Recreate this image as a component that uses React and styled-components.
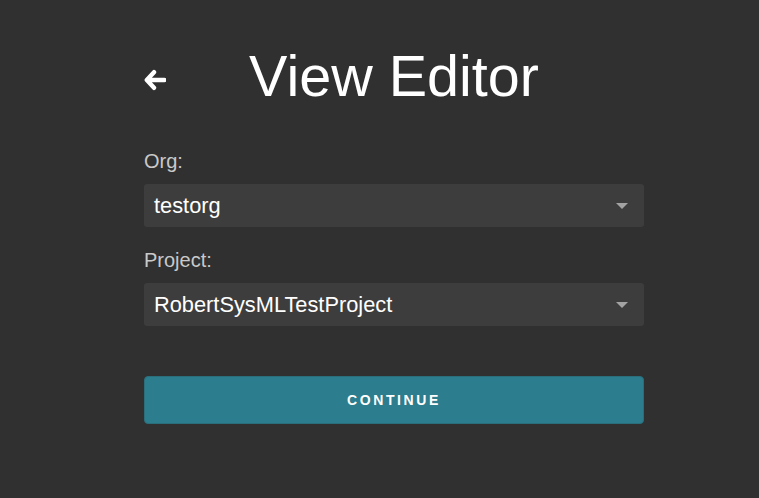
import React from "react";
import styled, { createGlobalStyle } from "styled-components";

const Global = createGlobalStyle`
  html, body { margin: 0; padding: 0; background: #303030; }
  body { font-family: "Liberation Sans", Arial, sans-serif; }
`;

const Page = styled.div`
  width: 759px;
  height: 498px;
  background: #303030;
  box-sizing: border-box;
  padding: 44px 0 0 144px;
`;

const Column = styled.div`
  width: 500px;
  display: flex;
  flex-direction: column;
`;

const Header = styled.div`
  display: grid;
  grid-template-columns: 1fr auto 1fr;
  align-items: center;
  margin-bottom: 42px;
`;

const BackButton = styled.button`
  justify-self: start;
  background: none;
  border: none;
  padding: 0;
  color: #ffffff;
  display: flex;
  align-items: center;
  cursor: pointer;
  margin-top: 7px;
`;

const Title = styled.h1`
  margin: 0;
  font-size: 57.5px;
  font-weight: 400;
  color: #ffffff;
  line-height: 64px;
`;

const Label = styled.label`
  font-size: 20px;
  color: #c9c9c9;
  line-height: 23px;
  margin-bottom: 11px;
  margin-top: ${(p) => p.$top || 0}px;
`;

const Select = styled.div`
  height: 43px;
  background: #3d3d3d;
  border-radius: 3px;
  display: flex;
  align-items: center;
  justify-content: space-between;
  padding: 0 16px 0 10px;
  color: #ffffff;
  font-size: 21.8px;
`;

const Caret = styled.span`
  width: 0;
  height: 0;
  border-left: 6px solid transparent;
  border-right: 6px solid transparent;
  border-top: 6px solid #a3a3a3;
`;

const Button = styled.button`
  margin-top: 50px;
  height: 48px;
  border: 1px solid #2a6e7c;
  border-radius: 4px;
  background: #2c7d8d;
  color: #ffffff;
  font-family: "Liberation Sans", Arial, sans-serif;
  font-weight: 700;
  font-size: 14px;
  letter-spacing: 2.6px;
  cursor: pointer;
`;

const BackArrow = () => (
  <svg width="22" height="22" viewBox="0 0 22 22" fill="none">
    <path
      d="M10 3.2 L2.8 11 L10 18.8 M3.5 11 H20.5"
      stroke="#ffffff"
      strokeWidth="4.4"
      strokeLinejoin="round"
      strokeLinecap="round"
    />
  </svg>
);

export default function App() {
  return (
    <>
      <Global />
      <Page>
        <Column>
          <Header>
            <BackButton aria-label="Back">
              <BackArrow />
            </BackButton>
            <Title>View Editor</Title>
            <span />
          </Header>
          <Label>Org:</Label>
          <Select>
            <span>testorg</span>
            <Caret />
          </Select>
          <Label $top={22}>Project:</Label>
          <Select>
            <span>RobertSysMLTestProject</span>
            <Caret />
          </Select>
          <Button>CONTINUE</Button>
        </Column>
      </Page>
    </>
  );
}
